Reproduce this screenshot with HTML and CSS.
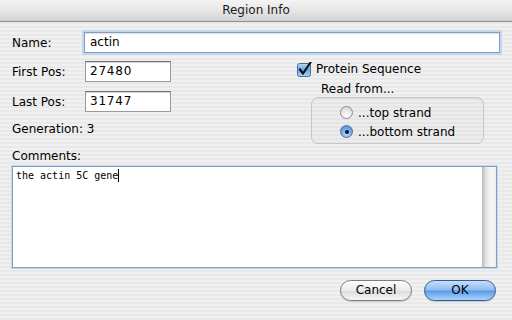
FILE: index.html
```html
<!DOCTYPE html>
<html lang="en">
<head>
  <meta charset="UTF-8">
  <title>Region Info</title>
  <link rel="stylesheet" href="styles.css">
</head>
<body>
  <div class="window">
    <div class="titlebar">Region Info</div>

    <div class="dialog">
      <div class="row name-row">
        <span class="lbl">Name:</span>
        <div class="field focus wide">actin</div>
      </div>

      <div class="middle">
        <div class="left-col">
          <div class="row">
            <span class="lbl">First Pos:</span>
            <div class="field num">27480</div>
          </div>
          <div class="row">
            <span class="lbl">Last Pos:</span>
            <div class="field num">31747</div>
          </div>
          <div class="gen">Generation: 3</div>
        </div>

        <div class="right-col">
          <div class="check">
            <svg class="checkbox" width="15" height="15" viewBox="0 0 15 15">
              <defs>
                <linearGradient id="cb" x1="0" y1="0" x2="0" y2="1">
                  <stop offset="0" stop-color="#bcd8f5"/>
                  <stop offset="0.5" stop-color="#6aa6e8"/>
                  <stop offset="1" stop-color="#a9d2fb"/>
                </linearGradient>
              </defs>
              <rect x="0.5" y="1.5" width="13" height="13" rx="2" fill="url(#cb)" stroke="#4a6c9b"/>
              <path d="M3 7.5 L6 11.5 L13.5 0.5" fill="none" stroke="#111" stroke-width="2.2" stroke-linecap="round" stroke-linejoin="round"/>
            </svg>
            <span>Protein Sequence</span>
          </div>
          <div class="read">Read from...</div>
          <div class="group">
            <div class="radio"><span class="dot"></span>...top strand</div>
            <div class="radio on"><span class="dot"></span>...bottom strand</div>
          </div>
        </div>
      </div>

      <div class="comments-lbl">Comments:</div>
      <div class="textarea">
        <div class="text">the actin 5C gene<span class="caret"></span></div>
        <div class="scroll"></div>
      </div>

      <div class="buttons">
        <div class="btn">Cancel</div>
        <div class="btn default">OK</div>
      </div>
    </div>
  </div>
</body>
</html>
```

FILE: styles.css
```css
body {
  margin: 0;
  font-family: "DejaVu Sans", sans-serif;
  font-size: 12px;
  color: #000;
  background: #ececec;
}
.window {
  width: 512px;
  height: 320px;
  overflow: hidden;
  background: repeating-linear-gradient(#f0f0f0 0 2px, #e9e9e9 2px 4px);
}
.titlebar {
  height: 21px;
  line-height: 21px;
  text-align: center;
  font-size: 12px;
  color: #1a1a1a;
  border-bottom: 1px solid #8e8e8e;
  background: linear-gradient(#f4f4f4, #e6e6e6 50%, #d2d2d2);
  border-radius: 5px 5px 0 0;
}
.dialog {
  padding: 0 12px;
}
.row {
  display: flex;
  align-items: center;
  height: 21px;
}
.name-row {
  margin-top: 10px;
}
.lbl {
  width: 72px;
  flex-shrink: 0;
}
.field {
  box-sizing: border-box;
  height: 21px;
  line-height: 19px;
  padding: 0 4px;
  background: #fff;
  border: 1px solid #9a9a9a;
  border-top-color: #6e6e6e;
  box-shadow: inset 0 1px 1px #d4d4d4;
}
.wide {
  flex: 1;
  padding-left: 5px;
}
.focus {
  border: 1px solid #7f9fc4;
  box-shadow: 0 0 0 2px #c3d6ec, inset 0 1px 1px #e0e0e0;
}
.num {
  width: 86px;
  margin-left: 1px;
  letter-spacing: 0.8px;
}
.middle {
  display: flex;
  margin-top: 8px;
  height: 84px;
}
.left-col {
  width: 285px;
}
.left-col .row + .row {
  margin-top: 9px;
}
.gen {
  margin-top: 8px;
  height: 18px;
  line-height: 18px;
}
.right-col {
  flex: 1;
}
.check {
  display: flex;
  align-items: center;
  gap: 4px;
  height: 16px;
  margin-top: 0;
}
.read {
  height: 16px;
  line-height: 16px;
  margin: 4px 0 0 24px;
}
.group {
  box-sizing: border-box;
  width: 173px;
  height: 47px;
  margin: 0 0 0 14px;
  padding: 5px 0 0 28px;
  border: 1px solid #c6c6c6;
  border-radius: 7px;
  background: rgba(0, 0, 0, 0.015);
  box-shadow: inset 0 1px 0 #dcdcdc;
}
.radio {
  display: flex;
  align-items: center;
  gap: 5px;
  height: 19px;
}
.dot {
  box-sizing: border-box;
  width: 13px;
  height: 13px;
  border-radius: 50%;
  border: 1px solid #8c8c8c;
  background: radial-gradient(circle at 50% 80%, #ffffff, #dedede 70%);
  position: relative;
}
.radio.on .dot {
  border-color: #4b6d9c;
  background: radial-gradient(circle at 50% 75%, #b7dafd, #5d9ce3 70%);
}
.radio.on .dot::after {
  content: "";
  position: absolute;
  left: 3.5px;
  top: 3.5px;
  width: 4px;
  height: 4px;
  border-radius: 50%;
  background: #111;
}
.comments-lbl {
  height: 16px;
  line-height: 16px;
  margin-top: 3px;
}
.textarea {
  box-sizing: border-box;
  display: flex;
  width: 485px;
  height: 102px;
  margin-top: 2px;
  background: #fff;
  border: 1px solid #7f9fc4;
  box-shadow: 0 0 0 1px #c3d6ec;
}
.text {
  flex: 1;
  padding: 2px 3px;
  font-family: "DejaVu Sans Mono", monospace;
  font-size: 10px;
  line-height: 13px;
}
.caret {
  display: inline-block;
  width: 1px;
  height: 13px;
  background: #000;
  vertical-align: top;
}
.scroll {
  width: 14px;
  background: linear-gradient(90deg, #b9b9b9, #e4e4e4 4px, #f7f7f7 9px, #ededed);
}
.buttons {
  display: flex;
  justify-content: flex-end;
  gap: 12px;
  margin: 12px 4px 0 0;
}
.btn {
  box-sizing: border-box;
  width: 72px;
  height: 21px;
  line-height: 19px;
  text-align: center;
  border-radius: 11px;
  border: 1px solid #7d7d7d;
  background: linear-gradient(#fdfdfd, #eaeaea 50%, #dcdcdc 52%, #f6f6f6);
  box-shadow: 0 1px 1px rgba(0, 0, 0, 0.15);
}
.btn.default {
  border-color: #345a94;
  background: linear-gradient(#c6defa, #8dbcf2 48%, #5b9be6 52%, #a8d4fb);
}
```
